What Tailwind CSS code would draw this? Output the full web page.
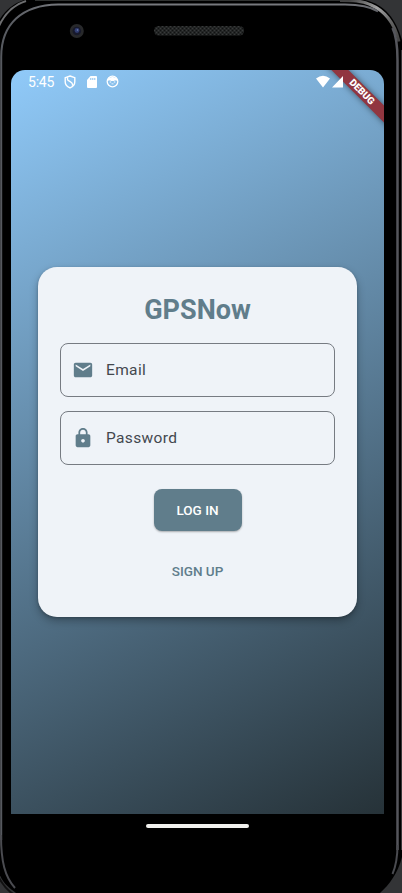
<!DOCTYPE html>
<html lang="en">
<head>
<meta charset="utf-8">
<title>GPSNow</title>
<script src="https://cdn.jsdelivr.net/npm/@tailwindcss/browser@4"></script>
</head>
<body class="font-[Roboto,sans-serif]">
<div class="relative isolate w-[402px] h-[893px] overflow-hidden bg-black pt-[70px] pl-[11px]">
  <!-- Device frame -->
  <svg class="absolute inset-0 -z-10" width="402" height="893" viewBox="0 0 402 893" fill="none">
    <defs>
      <linearGradient id="rim" x1="0" y1="0" x2="402" y2="0" gradientUnits="userSpaceOnUse"><stop stop-color="#55585e"/><stop offset=".15" stop-color="#77797e"/><stop offset=".85" stop-color="#77797e"/><stop offset="1" stop-color="#55565c"/></linearGradient>
      <linearGradient id="edge" x1="350" y1="0" x2="402" y2="50" gradientUnits="userSpaceOnUse"><stop stop-color="#444"/><stop offset=".35" stop-color="#a5a5a5"/><stop offset=".6" stop-color="#666"/><stop offset="1" stop-color="#333"/></linearGradient>
      <pattern id="mesh" width="4" height="4" patternUnits="userSpaceOnUse"><path fill="#232525" d="M0 0h4v4H0z"/><path fill="#383a3a" d="M0 0h1v1H0zM2 2h1v1H2z"/><path fill="#101111" d="M2 0h1v1H2zM0 2h1v1H0z"/></pattern>
    </defs>
    <path fill="#333436" d="M0 0h402v893H0z"/>
    <path fill="#000" d="M-3 45V24C3 12 12 4 24 0h341c22 5 33 22 39 48v797c-2 22-12 37-24 48H16C5 885-3 878-3 858z"/>
    <path stroke="#303231" stroke-width="1" d="M35 .5h320"/>
    <path stroke="#6d6e70" stroke-width="2" d="M-1 26C5 13 13 5 26 1"/>
    <path stroke="url(#edge)" stroke-width="3" d="M340 0.500c12 0 22 0 30 4 17 7 25 20 29 37"/>
    <path stroke="url(#rim)" stroke-width="2" d="M1.200 840V57C1.200 24 22 5 58 4.500h287c16 0 25 2 33 7"/>
    <path stroke="#55565c" stroke-width="2.500" d="M397.500 850V60c0-14-1-24-5-32"/>
    <path stroke="#4a4b50" stroke-width="2" d="M1 835c0 27 4 42 14 53M397.500 845c0 12-2 22-5 29"/>
    <path stroke="#39393b" stroke-width="1" d="M401.500 50v800"/>
    <path stroke="#111" stroke-width="2" d="M-1 878c4 7 8 12 14 16"/>
    <circle cx="76.800" cy="31" r="7" fill="#28292b"/>
    <circle cx="76.800" cy="31" r="4.300" fill="#17192b"/>
    <circle cx="77" cy="30.500" r="2.400" fill="#303c70"/>
    <circle cx="77.500" cy="30" r=".8" fill="#7586b9"/>
    <rect x="154" y="26" width="90" height="9.500" rx="4.500" fill="url(#mesh)"/>
  </svg>

  <main class="relative w-[373px] h-[744px] overflow-hidden rounded-t-[14px] bg-[linear-gradient(153.4deg,#90caf9,#263238)]">
    <header class="relative z-10 flex h-[23px] items-center pl-[17px] text-white">
      <span class="w-[36px] pt-[2px] text-[14px] leading-[23px] tracking-[-0.2px]">5:45</span>
      <svg width="12" height="14" viewBox="0 0 12 14" fill="none" stroke="white" stroke-width="1.400"><path d="M6 1l4.800 1.700v4c0 3-2 5-4.800 6.200C3.200 11.700 1.200 9.700 1.200 6.700v-4z"/><path d="M3.500 2.200v2c0 2 5 2.500 5 5v1.500"/></svg>
      <svg class="ml-[11px]" width="10" height="12" viewBox="0 0 10 12"><path fill="white" d="M3.500 0H9q1 0 1 1V11q0 1-1 1H1q-1 0-1-1V4z"/><path stroke="#8ac0ed" stroke-width="1" d="M3.800 2v2M5.800 2v2M7.800 2v2"/></svg>
      <svg class="ml-[9px]" width="13" height="13" viewBox="0 0 13 13"><circle cx="6.500" cy="6.500" r="5.300" fill="none" stroke="white" stroke-width="1.300"/><path fill="white" d="M1.500 5C2.500 1 10.500 1 11.500 5l-1 .7-1.500-.5-1 .7H5l-1-.7-1.500.5z"/><path fill="white" d="M3.700 6.500h1.500v1H3.700zM7.800 6.500h1.500v1H7.800zM5.500 8.500h2v.8h-2z"/></svg>
      <svg class="ml-[197px]" width="28" height="13" viewBox="0 0 28 13"><path fill="white" d="M0 3.400Q7-2 14 3.400L7 12.500zM27 1v11.500H16z"/></svg>
    </header>

    <!-- Debug ribbon -->
    <div class="absolute left-[300.500px] top-[16.200px] flex h-[11.700px] w-[100px] rotate-45 items-center justify-center bg-[#913640] text-[9.800px] font-black leading-none text-white shadow-[0_0_6px_rgba(0,0,0,0.5)]">DEBUG</div>

    <section class="ml-[27px] mt-[174px] flex h-[350px] w-[319px] flex-col items-center rounded-[19px] bg-[#eff3f8] px-[22px] pt-[26px] shadow-[0_4px_8px_rgba(0,0,0,0.28),0_1px_3px_rgba(0,0,0,0.2)]">
      <h1 class="h-[35px] text-[27px] font-bold leading-[35px] text-[#607d8b]">GPSNow</h1>
      <div class="mt-[15px] flex h-[54px] w-[275px] shrink-0 items-center rounded-[8px] border border-[#767b82] pl-[11px]">
        <svg width="22" height="22" viewBox="0 0 24 24" fill="#607d8b"><path d="M20 4H4c-1.100 0-2 .9-2 2v12c0 1.100.9 2 2 2h16c1.100 0 2-.9 2-2V6c0-1.100-.9-2-2-2zm0 4-8 5-8-5V6l8 5 8-5z"/></svg>
        <span class="ml-[12px] pt-[2px] text-[15.500px] tracking-[0.35px] text-[#43474e]">Email</span>
      </div>
      <div class="mt-[14px] flex h-[54px] w-[275px] shrink-0 items-center rounded-[8px] border border-[#767b82] pl-[11px]">
        <svg width="22" height="22" viewBox="0 0 24 24" fill="#607d8b"><path d="M18 8h-1V6c0-2.760-2.240-5-5-5S7 3.240 7 6v2H6c-1.100 0-2 .9-2 2v10c0 1.100.9 2 2 2h12c1.100 0 2-.9 2-2V10c0-1.100-.9-2-2-2zm-6 9c-1.100 0-2-.9-2-2s.9-2 2-2 2 .9 2 2-.9 2-2 2zm3.100-9H8.900V6c0-1.710 1.390-3.100 3.100-3.100s3.100 1.390 3.100 3.100z"/></svg>
        <span class="ml-[12px] pt-[2px] text-[15.500px] tracking-[0.35px] text-[#43474e]">Password</span>
      </div>
      <button class="mt-[24px] h-[42px] w-[88px] shrink-0 rounded-[8px] bg-[#607d8b] text-[13.500px] font-medium text-white shadow-[0_1px_2px_rgba(0,0,0,0.3)]">LOG IN</button>
      <button class="mt-[30px] h-[20px] text-[13.500px] font-medium leading-[20px] text-[#607d8b]">SIGN UP</button>
    </section>
  </main>
  <div class="ml-[135px] mt-[10px] h-[4px] w-[103px] rounded-full bg-[#f1f1ee]"></div>
</div>
</body>
</html>
